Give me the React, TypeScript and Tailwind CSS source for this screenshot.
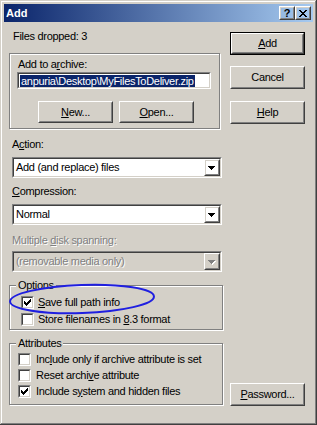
import React from "react";

const FONT = "font-['Liberation_Sans',Arial,sans-serif] text-[11px] tracking-[-0.3px]";

function Raised({ children, className = "", inner = "" }: { children?: React.ReactNode; className?: string; inner?: string }) {
  return (
    <div className={"border border-t-white border-l-white border-r-[#404040] border-b-[#404040] " + className}>
      <div className={"h-full w-full border border-t-[#D4D0C8] border-l-[#D4D0C8] border-r-[#808080] border-b-[#808080] flex items-center justify-center " + inner}>
        {children}
      </div>
    </div>
  );
}

function Sunken({ children, className = "", inner = "" }: { children?: React.ReactNode; className?: string; inner?: string }) {
  return (
    <div className={"border border-t-[#808080] border-l-[#808080] border-r-white border-b-white " + className}>
      <div className={"h-full w-full border border-t-[#404040] border-l-[#404040] border-r-[#D4D0C8] border-b-[#D4D0C8] " + inner}>
        {children}
      </div>
    </div>
  );
}

function Button({ children, isDefault = false }: { children: React.ReactNode; isDefault?: boolean }) {
  if (isDefault) {
    return (
      <div className="w-[75px] h-[23px] border border-black">
        <Raised className="h-full w-full">{children}</Raised>
      </div>
    );
  }
  return <Raised className="w-[75px] h-[23px]">{children}</Raised>;
}

function Arrow({ disabled = false }: { disabled?: boolean }) {
  const c = disabled ? "#808080" : "#000";
  return (
    <svg width="8" height="5" viewBox="0 0 8 5" shapeRendering="crispEdges">
      {disabled && (
        <g fill="#fff">
          <rect x="1" y="1" width="7" height="1" />
          <rect x="2" y="2" width="5" height="1" />
          <rect x="3" y="3" width="3" height="1" />
          <rect x="4" y="4" width="1" height="1" />
        </g>
      )}
      <g fill={c}>
        <rect x="0" y="0" width="7" height="1" />
        <rect x="1" y="1" width="5" height="1" />
        <rect x="2" y="2" width="3" height="1" />
        <rect x="3" y="3" width="1" height="1" />
      </g>
    </svg>
  );
}

function Combo({ text, disabled = false }: { text: string; disabled?: boolean }) {
  return (
    <Sunken className="ml-[3px] w-[210px] h-[21px]" inner={"flex " + (disabled ? "bg-[#D4D0C8]" : "bg-white")}>
      <div
        className={
          "flex-1 flex items-center pl-[2px] whitespace-nowrap " +
          (disabled ? "text-[#808080] [text-shadow:1px_1px_0_#fff]" : "text-black")
        }
      >
        {text}
      </div>
      <Raised className="w-[16px] h-full" inner="pt-[1px]">
        <Arrow disabled={disabled} />
      </Raised>
    </Sunken>
  );
}

function CheckMark() {
  return (
    <svg width="7" height="7" viewBox="0 0 7 7" shapeRendering="crispEdges" fill="#000">
      <rect x="6" y="0" width="1" height="1" />
      <rect x="5" y="1" width="2" height="1" />
      <rect x="0" y="2" width="1" height="1" />
      <rect x="4" y="2" width="3" height="1" />
      <rect x="0" y="3" width="2" height="1" />
      <rect x="3" y="3" width="3" height="1" />
      <rect x="0" y="4" width="5" height="1" />
      <rect x="1" y="5" width="3" height="1" />
      <rect x="2" y="6" width="1" height="1" />
    </svg>
  );
}

function Check({ checked, children, gap = "ml-[4px]" }: { checked?: boolean; children: React.ReactNode; gap?: string }) {
  return (
    <div className="flex items-center h-[13px]">
      <Sunken className="w-[13px] h-[13px] shrink-0" inner="bg-white flex items-center justify-center">
        {checked && <CheckMark />}
      </Sunken>
      <div className={gap + " whitespace-nowrap leading-[13px]"}>{children}</div>
    </div>
  );
}

function Group({
  legend,
  className = "",
  children,
}: {
  legend?: string;
  className?: string;
  children: React.ReactNode;
}) {
  return (
    <div
      className={
        "relative border border-[#808080] shadow-[inset_1px_1px_0_#fff,1px_1px_0_#fff] " + className
      }
    >
      {legend && (
        <span className="absolute left-[6px] top-[-7px] px-[2px] bg-[#D4D0C8] leading-[13px]">{legend}</span>
      )}
      {children}
    </div>
  );
}

function Label({ children, className = "" }: { children: React.ReactNode; className?: string }) {
  return <div className={"h-[13px] leading-[13px] whitespace-nowrap " + className}>{children}</div>;
}

function XGlyph() {
  return (
    <svg width="8" height="7" viewBox="0 0 8 7" shapeRendering="crispEdges" fill="#000">
      <rect x="0" y="0" width="2" height="1" />
      <rect x="6" y="0" width="2" height="1" />
      <rect x="1" y="1" width="2" height="1" />
      <rect x="5" y="1" width="2" height="1" />
      <rect x="2" y="2" width="4" height="1" />
      <rect x="3" y="3" width="2" height="1" />
      <rect x="2" y="4" width="4" height="1" />
      <rect x="1" y="5" width="2" height="1" />
      <rect x="5" y="5" width="2" height="1" />
      <rect x="0" y="6" width="2" height="1" />
      <rect x="6" y="6" width="2" height="1" />
    </svg>
  );
}

export default function App() {
  return (
    <div
      className={
        "relative w-[317px] h-[425px] bg-[#D4D0C8] text-black p-[4px] flex flex-col shadow-[inset_-1px_-1px_0_#404040,inset_1px_1px_0_#D4D0C8,inset_-2px_-2px_0_#808080,inset_2px_2px_0_#fff] " +
        FONT
      }
    >
      {/* Title bar */}
      <div className="h-[18px] flex items-center bg-[linear-gradient(to_right,#0A246A,#A6CAF0)]">
        <div className="flex-1 pl-[2px] text-white font-bold tracking-normal text-[11px] leading-[18px]">Add</div>
        <Raised className="w-[16px] h-[14px]" inner="font-bold text-[11px] leading-none tracking-normal">
          ?
        </Raised>
        <Raised className="w-[16px] h-[14px] mr-[2px]">
          <XGlyph />
        </Raised>
      </div>

      {/* Client */}
      <div className="flex-1 flex">
        {/* Left column */}
        <div className="ml-[5px] w-[214px] flex flex-col">
          <Label className="mt-[8px] pl-[4px]">Files dropped: 3</Label>

          <Group className="mt-[10px] w-[211px] h-[76px] flex flex-col pl-[7px]">
            <Label className="mt-[4px] pl-[1px]">
              Add to a<u>r</u>chive:
            </Label>
            <Sunken className="mt-[1px] w-[194px] h-[17px]" inner="bg-white flex items-center pl-[1px] overflow-hidden">
              <span className="bg-[#0A246A] text-white leading-[12px] h-[12px] whitespace-nowrap px-[1px]">
                anpuria\Desktop\MyFilesToDeliver.zip
              </span>
            </Sunken>
            <div className="mt-[12px] flex gap-[6px] pl-[21px]">
              <Raised className="w-[75px] h-[22px]">
                <span>
                  <u>N</u>ew...
                </span>
              </Raised>
              <Raised className="w-[75px] h-[22px]">
                <span>
                  <u>O</u>pen...
                </span>
              </Raised>
            </div>
          </Group>

          <Label className="mt-[9px] pl-[3px]">
            A<u>c</u>tion:
          </Label>
          <div className="mt-[6px]">
            <Combo text="Add (and replace) files" />
          </div>

          <Label className="mt-[7px] pl-[3px]">
            <u>C</u>ompression:
          </Label>
          <div className="mt-[6px]">
            <Combo text="Normal" />
          </div>

          <Label className="mt-[9px] pl-[3px] text-[#808080] [text-shadow:1px_1px_0_#fff]">
            Multiple <u>d</u>isk spanning:
          </Label>
          <div className="mt-[4px]">
            <Combo text="(removable media only)" disabled />
          </div>

          <Group legend="Options" className="mt-[13px] w-[214px] h-[45px] flex flex-col gap-[4px] pt-[10px] pl-[11px]">
            <Check checked gap="ml-[4px]">
              <u>S</u>ave full path info
            </Check>
            <Check gap="ml-[4px]">
              Store filenames in <u>8</u>.3 format
            </Check>
          </Group>

          <Group legend="Attributes" className="mt-[13px] w-[214px] h-[62px] flex flex-col gap-[3px] pt-[9px] pl-[8px]">
            <Check gap="ml-[5px]">
              Inc<u>l</u>ude only if archive attribute is set
            </Check>
            <Check gap="ml-[5px]">
              Reset archi<u>v</u>e attribute
            </Check>
            <Check checked gap="ml-[5px]">
              Include s<u>y</u>stem and hidden files
            </Check>
          </Group>
        </div>

        {/* Right column */}
        <div className="ml-[7px] w-[75px] flex flex-col">
          <div className="mt-[10px]">
            <Button isDefault>
              <span>
                <u>A</u>dd
              </span>
            </Button>
          </div>
          <div className="mt-[11px]">
            <Button>Cancel</Button>
          </div>
          <div className="mt-[12px]">
            <Button>
              <span>
                <u>H</u>elp
              </span>
            </Button>
          </div>
          <div className="mt-auto mb-[15px]">
            <Button>
              <span>
                <u>P</u>assword...
              </span>
            </Button>
          </div>
        </div>
      </div>

      {/* Hand-drawn highlight ellipse */}
      <svg className="absolute left-[7px] top-[282px] pointer-events-none" width="150" height="34" viewBox="0 0 150 34">
        <ellipse cx="75" cy="17" rx="72" ry="14" fill="none" stroke="#1f1fe0" strokeWidth="2" transform="rotate(-2 75 17)" />
      </svg>
    </div>
  );
}
